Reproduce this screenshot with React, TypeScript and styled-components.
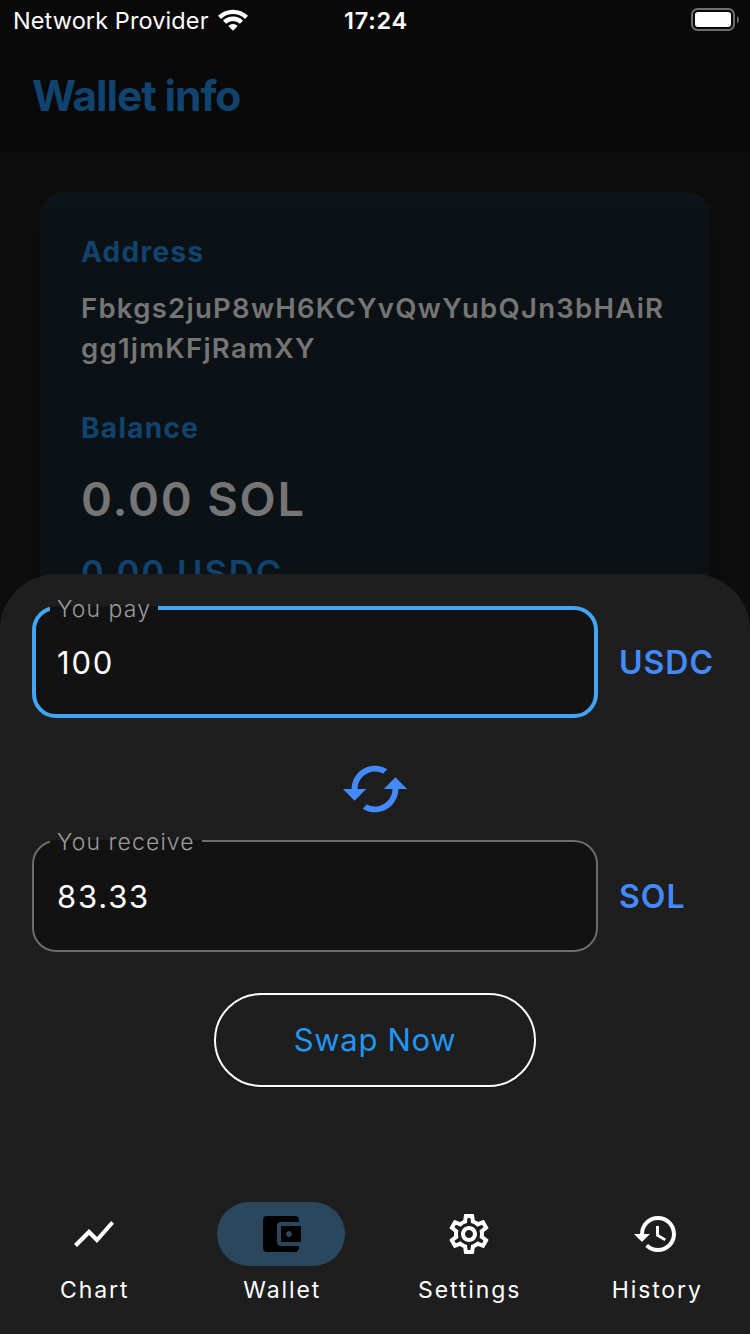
import React from "react";
import styled, { createGlobalStyle } from "styled-components";
import {
  MdAccountBalanceWallet,
  MdCached,
  MdHistory,
  MdOutlineSettings,
  MdShowChart,
} from "react-icons/md";

const GlobalStyle = createGlobalStyle`
  *, *::before, *::after { box-sizing: border-box; }
  body {
    margin: 0;
    background: #0d0d0d;
    font-family: Inter, "Liberation Sans", sans-serif;
  }
`;

const Screen = styled.main`
  position: relative;
  display: flex;
  flex-direction: column;
  width: 750px;
  height: 1334px;
  overflow: hidden;
  background: #0d0d0d;
`;

const TopBar = styled.header`
  flex: none;
  height: 152px;
  background: #090909;
`;

const StatusBar = styled.div`
  display: grid;
  grid-template-columns: 1fr auto 1fr;
  align-items: center;
  height: 40px;
  padding: 0 11px 0 13px;
  color: #fff;
  font-size: 23.5px;
`;

const Carrier = styled.div`
  display: flex;
  align-items: center;
  gap: 9px;
  letter-spacing: 0.1px;
  white-space: nowrap;
`;

const Clock = styled.time`
  font-weight: 600;
  letter-spacing: 0.8px;
`;

const BatteryIcon = styled.svg`
  justify-self: end;
`;

const Title = styled.h1`
  margin: 0;
  padding: 29px 32px 0;
  color: #10446e;
  font-size: 42.5px;
  font-weight: 700;
  line-height: 54px;
  letter-spacing: -1.1px;
`;

const Card = styled.section`
  flex: none;
  display: flex;
  flex-direction: column;
  height: 560px;
  margin: 40px;
  padding: 40px 41px;
  border-radius: 24px;
  background: linear-gradient(#0e1418, #0c1115 22px);
  box-shadow: 0 20px 24px rgba(0, 0, 0, 0.22);
`;

const CardLabel = styled.h2`
  margin: 0;
  color: #10446e;
  font-size: 28px;
  font-weight: 700;
  line-height: 40px;
  letter-spacing: 1.3px;
`;

const Address = styled.p`
  width: 600px;
  margin: 16px 0 40px;
  color: #757575;
  font-size: 27.5px;
  font-weight: 600;
  line-height: 40px;
  letter-spacing: 1.27px;
`;

const Amount = styled.p`
  margin: 21px 0 0;
  color: #757575;
  font-size: 47px;
  font-weight: 600;
  line-height: 60px;
  letter-spacing: 1.8px;
`;

const SubAmount = styled.p`
  margin: 21px 0 0;
  color: #10446e;
  font-size: 34.5px;
  font-weight: 600;
  line-height: 46px;
  letter-spacing: 2px;
`;

const Sheet = styled.section`
  position: absolute;
  inset: 574px 0 0;
  display: flex;
  flex-direction: column;
  border-radius: 56px 56px 0 0;
  background: #1e1e1e;
`;

const SwapForm = styled.div`
  flex: none;
  display: flex;
  flex-direction: column;
  height: 611px;
  padding: 20px 32px 0;
`;

const FieldRow = styled.div`
  display: flex;
  align-items: center;
  gap: 21px;
`;

const Field = styled.fieldset<{ $active?: boolean }>`
  width: 566px;
  height: ${(p) => (p.$active ? 124 : 125)}px;
  margin: 0;
  padding: 0 0 0 ${(p) => (p.$active ? 14 : 16)}px;
  border: ${(p) => (p.$active ? "4px solid #42a5f5" : "2px solid #6d6d6d")};
  border-radius: 24px;
  background: #121212;
`;

const FieldLabel = styled.legend`
  padding: 2px 7px 0;
  color: #9b9b9b;
  font-size: 23px;
  font-weight: 300;
  line-height: 26px;
  letter-spacing: 1.1px;
`;

const Value = styled.div<{ $active?: boolean }>`
  padding: ${(p) => (p.$active ? 21 : 22)}px 0 0 7px;
  color: #fff;
  font-size: 31px;
  font-weight: 400;
  line-height: 40px;
  letter-spacing: 1.8px;
`;

const Currency = styled.span`
  padding-top: 14px;
  color: #448aff;
  font-size: 32px;
  font-weight: 600;
  line-height: 40px;
  letter-spacing: 1px;
`;

const FlipButton = styled.button`
  align-self: center;
  display: flex;
  margin: 36px 0 3px;
  padding: 0;
  border: 0;
  background: none;
  color: #448aff;
`;

const SwapButton = styled.button`
  align-self: center;
  width: 322px;
  height: 94px;
  margin-top: 41px;
  border: 2px solid #fff;
  border-radius: 47px;
  background: transparent;
  color: #2196f3;
  font: 400 31px/40px Inter, "Liberation Sans", sans-serif;
  letter-spacing: 0.7px;
  box-shadow: 0 1px 2px rgba(0, 0, 0, 0.25);
`;

const NavBar = styled.nav`
  display: grid;
  grid-template-columns: repeat(4, 1fr);
  padding-top: 17px;
`;

const NavItem = styled.a`
  display: flex;
  flex-direction: column;
  align-items: center;
  gap: 8px;
  color: #fff;
`;

const NavLabel = styled.span`
  padding-left: 2px;
  font-size: 23px;
  font-weight: 400;
  line-height: 32px;
  letter-spacing: 1.9px;
`;

const NavPill = styled.span<{ $selected?: boolean }>`
  display: flex;
  align-items: center;
  justify-content: center;
  width: 128px;
  height: 64px;
  border-radius: 32px;
  background: ${(p) => (p.$selected ? "#2a475e" : "transparent")};
  color: ${(p) => (p.$selected ? "#000" : "#fff")};
`;

const navItems = [
  { label: "Chart", Icon: MdShowChart },
  { label: "Wallet", Icon: MdAccountBalanceWallet, selected: true },
  { label: "Settings", Icon: MdOutlineSettings },
  { label: "History", Icon: MdHistory },
];

export default function App() {
  return (
    <>
      <GlobalStyle />
      <Screen>
        <TopBar>
          <StatusBar>
            <Carrier>
              Network Provider
              <svg width="30" height="22" viewBox="0 0 30 22" fill="#fff">
                <path d="M0 6.700a21.700 21.700 0 0 1 30 0l-3 3.200a17 17 0 0 0-24 0z" />
                <path d="M5 11.700a14.200 14.200 0 0 1 20 0l-3.100 3.100a9.700 9.700 0 0 0-13.800 0z" />
                <path d="M10.300 17.100a6.400 6.400 0 0 1 9.400 0L15 21.800z" />
              </svg>
            </Carrier>
            <Clock>17:24</Clock>
            <BatteryIcon width="48" height="24" viewBox="0 0 48 24">
              <rect x="1" y="1" width="42" height="21" rx="5.5" fill="none" stroke="#6e6e6e" strokeWidth="2" />
              <rect x="4" y="4" width="36" height="15" rx="3" fill="#fff" />
              <path d="M46 8c2.6 1.6 2.6 5.900 0 7.500z" fill="#6e6e6e" />
            </BatteryIcon>
          </StatusBar>
          <Title>Wallet info</Title>
        </TopBar>
        <Card>
          <CardLabel>Address</CardLabel>
          <Address>
            Fbkgs2juP8wH6KCYvQwYubQJn3bHAiR
            <br />
            gg1jmKFjRamXY
          </Address>
          <CardLabel>Balance</CardLabel>
          <Amount>0.00 SOL</Amount>
          <SubAmount>0.00 USDC</SubAmount>
        </Card>
        <Sheet>
          <SwapForm>
            <FieldRow>
              <Field $active>
                <FieldLabel>You pay</FieldLabel>
                <Value $active>100</Value>
              </Field>
              <Currency>USDC</Currency>
            </FieldRow>
            <FlipButton aria-label="Reverse direction">
              <MdCached size={70} />
            </FlipButton>
            <FieldRow>
              <Field>
                <FieldLabel>You receive</FieldLabel>
                <Value>83.33</Value>
              </Field>
              <Currency>SOL</Currency>
            </FieldRow>
            <SwapButton>Swap Now</SwapButton>
          </SwapForm>
          <NavBar>
            {navItems.map(({ label, Icon, selected }) => (
              <NavItem key={label}>
                <NavPill $selected={selected}>
                  <Icon size={48} />
                </NavPill>
                <NavLabel>{label}</NavLabel>
              </NavItem>
            ))}
          </NavBar>
        </Sheet>
      </Screen>
    </>
  );
}
